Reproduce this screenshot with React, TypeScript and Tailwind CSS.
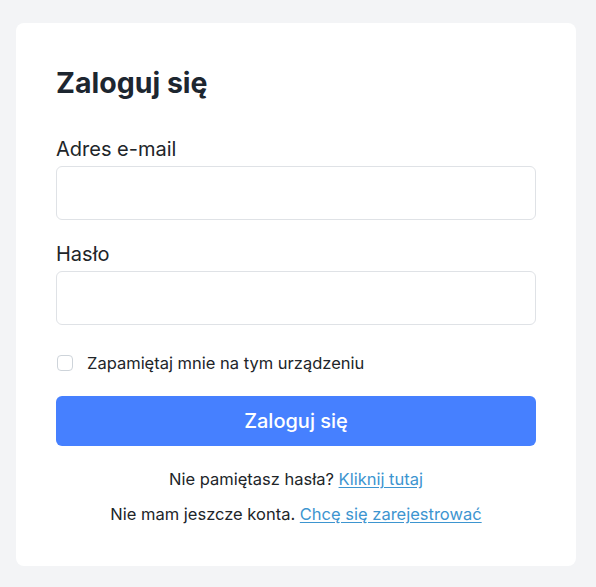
import React from "react";

export default function App() {
  return (
    <div className="min-h-screen bg-[#f3f4f6] pt-[23px] pl-4" style={{ fontFamily: "Inter, 'Noto Sans', sans-serif" }}>
      <div className="w-[560px] h-[543px] bg-white rounded-lg px-10 pt-10 text-[#212529]">
        <h1 className="text-[28.5px] leading-10 font-bold text-[#1d2630]">Zaloguj się</h1>
        <label className="block mt-[31px] text-[20px] leading-[30px]">Adres e-mail</label>
        <input type="email" className="block mt-[2px] w-full h-[54px] border border-[#dfe2e6] rounded-md outline-none" />
        <label className="block mt-[19px] text-[20px] leading-[30px]">Hasło</label>
        <input type="password" className="block mt-[2px] w-full h-[54px] border border-[#dfe2e6] rounded-md outline-none" />
        <div className="mt-[26px] flex items-center h-6">
          <span className="ml-px w-4 h-4 border border-[#ced4da] rounded-[4px] bg-white shrink-0" />
          <span className="ml-[14px] text-[16.5px] leading-6">Zapamiętaj mnie na tym urządzeniu</span>
        </div>
        <button className="mt-[21px] w-full h-[50px] rounded-md bg-[#4680ff] text-white text-[20px] font-medium">
          Zaloguj się
        </button>
        <p className="mt-[21px] text-center text-[16.5px] leading-6">
          Nie pamiętasz hasła? <a href="#" className="text-[#3d95d0] underline underline-offset-2">Kliknij tutaj</a>
        </p>
        <p className="mt-[11px] text-center text-[16.5px] leading-6">
          Nie mam jeszcze konta. <a href="#" className="text-[#3d95d0] underline underline-offset-2">Chcę się zarejestrować</a>
        </p>
      </div>
    </div>
  );
}
